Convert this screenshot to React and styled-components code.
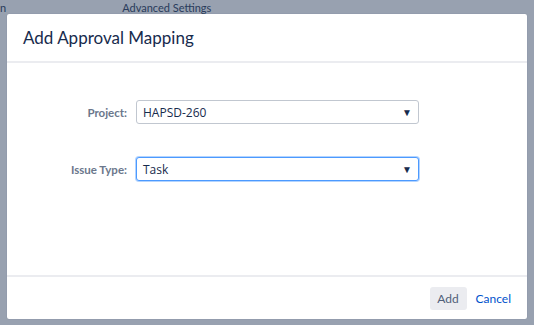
import React from "react";
import styled, { createGlobalStyle } from "styled-components";

const GlobalStyle = createGlobalStyle`
  html, body {
    margin: 0;
    padding: 0;
    width: 534px;
    height: 325px;
    overflow: hidden;
    font-family: Lato, "Open Sans", sans-serif;
  }
`;

const Page = styled.div`
  position: relative;
  width: 534px;
  height: 325px;
  background: #ffffff;
  overflow: hidden;
`;

const TabBar = styled.div`
  display: flex;
  gap: 116px;
  height: 15px;
  font-size: 11px;
  line-height: 15px;
  color: #42526e;
`;

const Backdrop = styled.div`
  position: absolute;
  inset: 0;
  background: rgba(9, 30, 66, 0.42);
  padding: 14px 7px 6px 7px;
  box-sizing: border-box;
  display: flex;
`;

const Dialog = styled.div`
  flex: 1;
  background: #ffffff;
  border-radius: 2px;
  box-shadow: 0 0 1px rgba(9, 30, 66, 0.3);
  display: flex;
  flex-direction: column;
`;

const Header = styled.div`
  height: 47px;
  display: flex;
  align-items: center;
  padding: 0 16px;
  border-bottom: 2px solid #ebecf0;
`;

const Title = styled.h2`
  margin: 0;
  font-size: 17px;
  font-weight: 400;
  color: #172b4d;
`;

const Body = styled.div`
  flex: 1;
  display: flex;
  flex-direction: column;
  gap: 33px;
  padding: 37px 0 0 0;
`;

const Field = styled.div`
  display: grid;
  grid-template-columns: 120px 283px;
  column-gap: 9px;
  align-items: center;
`;

const Label = styled.label`
  text-align: right;
  font-size: 11.5px;
  font-weight: 700;
  color: #6b778c;
`;

const Select = styled.div`
  height: 24px;
  box-sizing: border-box;
  border: 1px solid ${(p) => (p.focused ? "#4c9aff" : "#c1c7d0")};
  box-shadow: ${(p) => (p.focused ? "0 0 0 1px #b3d4ff" : "none")};
  border-radius: 3px;
  display: flex;
  align-items: center;
  justify-content: space-between;
  padding: 0 6px;
  font-family: "Open Sans", sans-serif;
  font-size: 12px;
  color: #172b4d;
  background: #fff;
`;

const Caret = styled.span`
  font-size: 10px;
  color: #172b4d;
`;

const Footer = styled.div`
  height: 42px;
  border-top: 2px solid #ebecf0;
  display: flex;
  justify-content: flex-end;
  align-items: center;
  gap: 9px;
  padding: 0 16px 0 0;
`;

const AddButton = styled.button`
  border: none;
  background: #ebecf0;
  color: #505f79;
  border-radius: 3px;
  height: 23px;
  width: 37px;
  font: inherit;
  font-size: 12px;
  padding: 0;
`;

const CancelLink = styled.a`
  color: #0052cc;
  font-size: 12px;
  text-decoration: none;
`;

export default function App() {
  return (
    <>
      <GlobalStyle />
      <Page>
        <TabBar>
          <span>n</span>
          <span>Advanced Settings</span>
        </TabBar>
        <Backdrop>
          <Dialog>
            <Header>
              <Title>Add Approval Mapping</Title>
            </Header>
            <Body>
              <Field>
                <Label>Project:</Label>
                <Select>
                  <span>HAPSD-260</span>
                  <Caret>▼</Caret>
                </Select>
              </Field>
              <Field>
                <Label>Issue Type:</Label>
                <Select focused>
                  <span>Task</span>
                  <Caret>▼</Caret>
                </Select>
              </Field>
            </Body>
            <Footer>
              <AddButton>Add</AddButton>
              <CancelLink href="#">Cancel</CancelLink>
            </Footer>
          </Dialog>
        </Backdrop>
      </Page>
    </>
  );
}
